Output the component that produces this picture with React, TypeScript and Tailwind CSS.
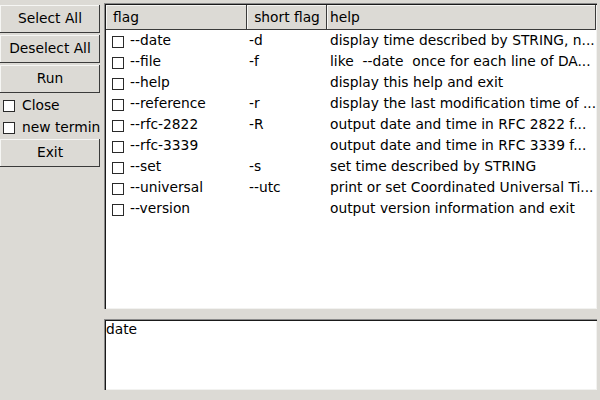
import React from 'react';

const rows = [
  { flag: '--date', short: '-d', help: 'display time described by STRING, n...' },
  { flag: '--file', short: '-f', help: 'like  --date  once for each line of DA...' },
  { flag: '--help', short: '', help: 'display this help and exit' },
  { flag: '--reference', short: '-r', help: 'display the last modification time of ...' },
  { flag: '--rfc-2822', short: '-R', help: 'output date and time in RFC 2822 f...' },
  { flag: '--rfc-3339', short: '', help: 'output date and time in RFC 3339 f...' },
  { flag: '--set', short: '-s', help: 'set time described by STRING' },
  { flag: '--universal', short: '--utc', help: 'print or set Coordinated Universal Ti...' },
  { flag: '--version', short: '', help: 'output version information and exit' },
];

const upBox = 'bg-[#dcdad5] shadow-[inset_-1px_-1px_0_#3a3a3a,inset_1px_1px_0_#f6f6f4]';
const downBox = 'bg-white shadow-[inset_1px_1px_0_#8a8a8a,inset_2px_2px_0_#1a1a1a,inset_-1px_-1px_0_#f2f2f0]';

const Button = ({ label }: { label: string }) => (
  <div className={`${upBox} h-[28px] w-[100px] flex items-center justify-center`}>{label}</div>
);

const Box = () => <div className="w-[12px] h-[12px] bg-white border border-[#2a2a2a] shrink-0" />;

const App: React.FC = () => {
  return (
    <div
      className="w-[600px] h-[400px] bg-[#dcdad5] flex text-[13.8px] text-black leading-none overflow-hidden"
      style={{ fontFamily: '"DejaVu Sans", sans-serif' }}
    >
      <div className="w-[100px] shrink-0 pt-[5px] flex flex-col">
        <Button label="Select All" />
        <div className="h-[2px]" />
        <Button label="Deselect All" />
        <div className="h-[2px]" />
        <Button label="Run" />
        <div className="h-[2px]" />
        <div className="h-[22px] flex items-center pl-[3px] gap-[7px]">
          <Box />
          <span>Close</span>
        </div>
        <div className="h-[22px] flex items-center pl-[3px] gap-[7px] whitespace-nowrap">
          <Box />
          <span>new termin</span>
        </div>
        <Button label="Exit" />
      </div>

      <div className="ml-[4px] w-[493px] shrink-0 pt-[3px] flex flex-col">
        <div className={`${downBox} h-[306px] pl-[2px] pt-[2px] pr-[1px] pb-[1px] flex flex-col`}>
          <div className="flex h-[25px] shrink-0">
            <div className={`${upBox} w-[141px] shrink-0 flex items-center pl-[7px]`}>flag</div>
            <div className={`${upBox} w-[80px] shrink-0 flex items-center justify-center`}>short flag</div>
            <div className={`${upBox} flex-1 flex items-center pl-[3px]`}>help</div>
          </div>
          <div className="flex flex-col pt-[1px]">
            {rows.map((r) => (
              <div key={r.flag} className="flex h-[21px] items-center whitespace-pre">
                <div className="w-[141px] shrink-0 flex items-center pl-[6px] gap-[6px]">
                  <Box />
                  <span className="-mt-[2px]">{r.flag}</span>
                </div>
                <div className="w-[80px] shrink-0 pl-[2px] -mt-[2px]">{r.short}</div>
                <div className="flex-1 pl-[3px] -mt-[2px]">{r.help}</div>
              </div>
            ))}
          </div>
        </div>
        <div className={`${downBox} mt-[10px] h-[71px] pl-[2px] pt-[4px]`}>date</div>
      </div>
    </div>
  );
};

export default App;
